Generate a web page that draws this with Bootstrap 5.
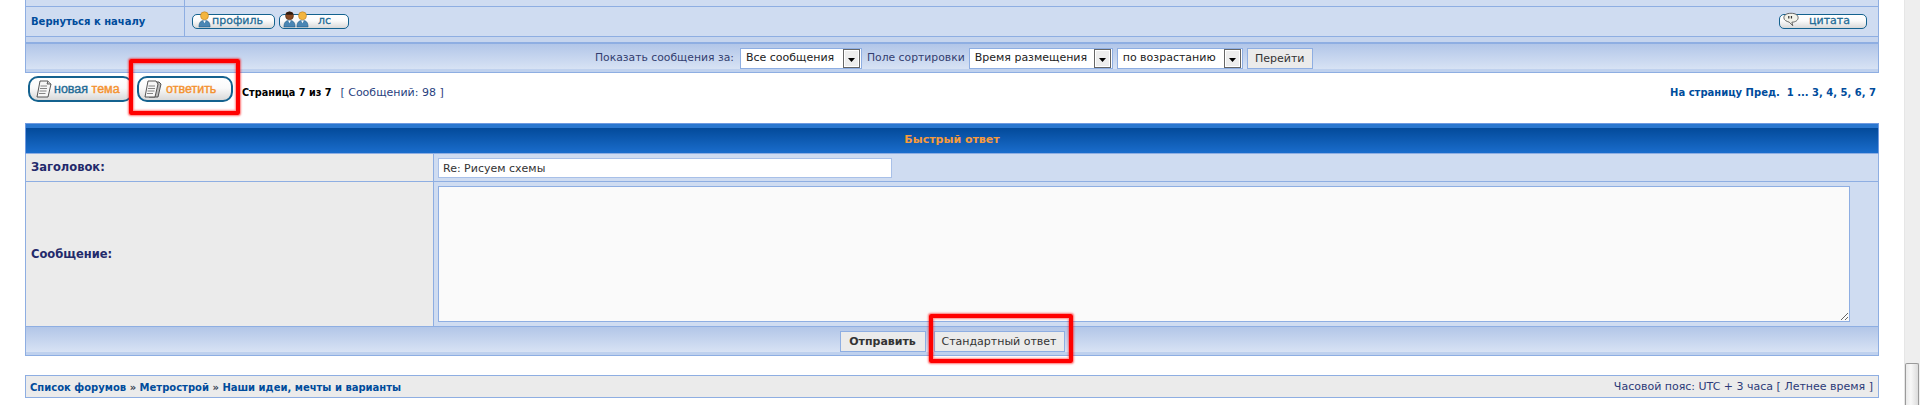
<!doctype html>
<html lang="ru">
<head>
<meta charset="utf-8">
<title>Быстрый ответ</title>
<link href="https://cdn.jsdelivr.net/npm/bootstrap@5.3.3/dist/css/bootstrap.min.css" rel="stylesheet">
<style>
  html, body { height: 405px; overflow: hidden; }
  body { font-family: "DejaVu Sans", Verdana, sans-serif; font-size: 11px; color: #323d4f; background: #fff; }
  a { color: #004c9c; text-decoration: none; }
  .page-main { width: 1904px; height: 405px; padding: 0 25px; flex: none; }
  .edge { border: 1px solid #8eaee2; border-width: 0 1px; }
  .cell-left { width: 159px; border-right: 1px solid #8eaee2; flex: none; }
  .row-top { height: 7px; background: #cfdcf1; border-bottom: 1px solid #8eaee2; }
  .row-author { height: 30px; background: #cfdcf1; border-bottom: 1px solid #8eaee2; }
  .row-author .cell-left { padding-left: 5px; font-size: 10px; font-weight: 700; }
  .row-gap { height: 5px; background: #c6d5ee; }
  .grad-bar { background: linear-gradient(#b2c6e8, #d7e2f4 88%, #bfd1ee 90%); border: 1px solid #8eaee2; }
  .bar-view { height: 31px; border-top-width: 2px; font-size: 10.8px; color: #323d6f; padding-left: 569px; }
  .bar-view select.form-select { font-family: "DejaVu Sans", Verdana, sans-serif; font-size: 11px; color: #222; height: 21px; padding: 0 0 0 5px; border: 1px solid #8eaee2; border-radius: 0; background-color: #fff; background-image: url("data:image/svg+xml,%3Csvg xmlns='http://www.w3.org/2000/svg' width='17' height='19'%3E%3Crect x='.5' y='.5' width='16' height='18' fill='%23ededed' stroke='%23666'/%3E%3Crect x='1.500' y='1.500' width='14' height='16' fill='none' stroke='%23fff'/%3E%3Cpath d='M5 9h7l-3.500 4z' fill='%23000'/%3E%3C/svg%3E"); background-size: 17px 19px; background-position: right 1px center; box-shadow: none; }
  .bar-view .forum-btn { height: 21px; width: 66px; padding: 0; font-size: 11px; margin-left: 4px; }
  .forum-btn { background: #ebebeb; border: 1px solid #8eaee2; border-radius: 0; color: #333; font-size: 11px; line-height: 1; }
  .pill { display: inline-flex; align-items: center; background: linear-gradient(#fff, #fafafa 45%, #d9d9d9); border: 2px solid #14628f; color: #1f6b95; white-space: nowrap; }
  .pill-sm { height: 15px; border-width: 1px; border-radius: 5px; font-size: 11px; -webkit-text-stroke: .3px #1f6b95; }
  .pill-sm svg { position: absolute; top: -4px; }
  .pill-lg { height: 26px; border-radius: 10px; font-family: "Liberation Sans", Arial, sans-serif; font-size: 12.500px; -webkit-text-stroke: .4px currentColor; padding-left: 5px; }
  .pill-lg svg { flex: none; }
  .orange { color: #f4912e; }
  .toolbar { height: 50px; padding: 3px 3px 0 3px; }
  .page-info { font-weight: 700; color: #000; font-size: 9.700px; }
  .post-count { color: #2a3f80; font-size: 11px; margin-left: 9px; }
  .pager { font-weight: 700; font-size: 10px; }
  .quick-head { height: 31px; padding-top: 4px; background: linear-gradient(#2a77cf 0 4px, #034a9a 4px, #1a6dcc); border: 1px solid #6f9ae0; border-bottom-color: #8eaee2; color: #f79b3c; font-weight: 700; }
  .form-row { background: #cfdcf1; border-bottom: 1px solid #8eaee2; }
  .form-label-cell { width: 408px; flex: none; background: #ebebeb; border-right: 1px solid #8eaee2; padding: 1px 0 0 5px; font-weight: 700; font-size: 11.500px; color: #232a6b; }
  .form-row input.form-control { width: 454px; height: 20px; margin: 4px 0 0 4px; padding: 0 4px; font-size: 11px; color: #333; border: 1px solid #a8c0e8; border-radius: 0; background: #fff; box-shadow: none; }
  .form-row textarea.form-control { width: 1412px; height: 136px; margin: 4px 0 0 4px; padding: 4px; border: 1px solid #8eaee2; border-radius: 0; background: #fafafa; box-shadow: none; min-height: 0; }
  .row-title { height: 28px; }
  .row-msg { height: 145px; }
  .bar-submit { height: 29px; gap: 8px; border-top-width: 0; }
  .bar-submit .forum-btn { height: 21px; padding: 0; }
  .crumbs { height: 23px; margin-top: 19px; padding: 1px 5px 0 4px; background: #ebebeb; border: 1px solid #8eaee2; }
  .crumbs-links { font-weight: 700; font-size: 10px; }
  .tz { color: #2c3a78; font-size: 11px; }
  .hl { position: absolute; border: 4px solid #f00; box-shadow: 0 0 2px 1px rgba(255,0,0,.55), inset 0 0 2px 1px rgba(255,0,0,.45); border-radius: 2px; pointer-events: none; }
  .hl-reply { left: 129px; top: 59px; width: 111px; height: 56px; }
  .hl-std { left: 929px; top: 314px; width: 144px; height: 49px; }
  .fake-scroll { width: 16px; height: 405px; background: #eeeeee; flex: none; border-left: 1px solid #e6e6e6; }
  .fake-scroll-gap { height: 363px; }
  .fake-thumb { height: 42px; margin: 0 1px 0 0; background: linear-gradient(90deg, #e9e9e9, #f8f8f8 40%, #dcdcdc); border: 1px solid #9a9a9a; border-bottom: 0; border-radius: 2px 2px 0 0; }

  .author-left { padding-left: 7px; }
  .author-profile { width: 83px; padding-left: 19px; }
  .profile-ico { left: 5px; }
  .author-pm { width: 70px; padding-left: 38px; }
  .author-pm svg { left: 3px; }
  .author-pm svg.pm-second { left: 16px; }
  .author-quote { width: 88px; margin-right: 11px; padding-left: 29px; }
  .author-quote svg { left: 3px; top: -3px; }
  .btn-new { width: 105px; gap: 1px; }
  .btn-reply { width: 96px; margin-left: 4px; gap: 4px; }
  .toolbar-info { margin: 9px 0 0 9px; }
  .label-sort { margin-left: 5px; }
  .sel-a { width: 122px !important; margin-left: 6px; }
  .sel-b { width: 144px !important; margin-left: 4px; }
  .sel-c { width: 126px !important; margin-left: 4px; }
  .btn-send { width: 86px; font-size: 11px; }
  .btn-std { width: 131px; }
</style>
</head>
<body class="d-flex position-relative">

<svg width="0" height="0" class="position-absolute">
  <defs>
    <symbol id="ico-doc" viewBox="0 0 18 18">
      <path d="M5 1h8l3 3-3 13H2z" fill="#f6f6f6" stroke="#444" stroke-width=".9"/>
      <path d="M13 1l-1 3h4" fill="#ccc" stroke="#444" stroke-width=".8"/>
      <path d="M5.500 6h6.500M5 8.500h7M4.500 11h7M4 13.500h6.500" stroke="#777" stroke-width=".9" fill="none"/>
    </symbol>
    <symbol id="ico-doc2" viewBox="0 0 18 18">
      <path d="M7 2h8l2 2-3 13H5z" fill="#bbb" stroke="#444" stroke-width=".9"/>
      <path d="M4 1h8l2 3-3 13H1z" fill="#f6f6f6" stroke="#444" stroke-width=".9"/>
      <path d="M4.500 6h6.500M4 8.500h7M3.500 11h7M3 13.500h6" stroke="#777" stroke-width=".9" fill="none"/>
    </symbol>
    <symbol id="ico-user" viewBox="0 0 14 18">
      <circle cx="7" cy="5" r="4.300" fill="#f3b53f" stroke="#b97a1a" stroke-width=".6"/>
      <path d="M1 17c0-5 2-7 6-7s6 2 6 7z" fill="#4a86b4" stroke="#1e5a84" stroke-width=".6"/>
      <path d="M5.500 10h3l-1.500 3z" fill="#fff"/>
    </symbol>
    <symbol id="ico-user-dark" viewBox="0 0 14 18">
      <circle cx="7" cy="5" r="4.300" fill="#8a4a22" stroke="#40230f" stroke-width=".6"/>
      <path d="M3 3c1-3 7-3 8 0l-1 1H4z" fill="#2e1a0e"/>
      <path d="M1 17c0-5 2-7 6-7s6 2 6 7z" fill="#4a86b4" stroke="#1e5a84" stroke-width=".6"/>
      <path d="M5.500 10h3l-1.500 3z" fill="#fff"/>
    </symbol>
    <symbol id="ico-quote" viewBox="0 0 18 16">
      <path d="M9 1c5 0 8 2 8 5s-3 5-7 5l1 4-4-4C4 10 1 9 1 6s3-5 8-5z" fill="#f2f2ea" stroke="#555" stroke-width="1"/>
      <path d="M6.500 4v3M9.500 4v3" stroke="#333" stroke-width="1.400"/>
    </symbol>
  </defs>
</svg>

<div class="page-main position-relative">
  <div class="edge row-top d-flex"><div class="cell-left"></div></div>
  <div class="edge row-author d-flex">
    <div class="cell-left d-flex align-items-center"><a href="#">Вернуться к началу</a></div>
    <div class="flex-grow-1 d-flex align-items-center justify-content-between">
      <div class="d-flex gap-1 author-left">
        <a href="#" class="pill pill-sm position-relative author-profile"><svg width="13" height="17" class="profile-ico"><use href="#ico-user"/></svg><span>профиль</span></a>
        <a href="#" class="pill pill-sm position-relative author-pm"><svg width="13" height="17"><use href="#ico-user-dark"/></svg><svg width="13" height="17" class="pm-second"><use href="#ico-user"/></svg><span>лс</span></a>
      </div>
      <a href="#" class="pill pill-sm position-relative author-quote"><svg width="16" height="15"><use href="#ico-quote"/></svg><span>цитата</span></a>
    </div>
  </div>
  <div class="edge row-gap"></div>
  <div class="grad-bar bar-view d-flex align-items-center">
    <span>Показать сообщения за:</span>
    <select class="form-select sel-a"><option>Все сообщения</option></select>
    <span class="label-sort">Поле сортировки</span>
    <select class="form-select sel-b"><option>Время размещения</option></select>
    <select class="form-select sel-c"><option>по возрастанию</option></select>
    <button type="button" class="btn forum-btn">Перейти</button>
  </div>

  <div class="toolbar d-flex align-items-start">
    <a href="#" class="pill pill-lg btn-new"><svg width="18" height="18"><use href="#ico-doc"/></svg><span>новая <span class="orange">тема</span></span></a>
    <a href="#" class="pill pill-lg btn-reply orange"><svg width="18" height="18"><use href="#ico-doc2"/></svg><span>ответить</span></a>
    <div class="toolbar-info d-flex flex-grow-1 justify-content-between">
      <div><span class="page-info">Страница 7 из 7</span><span class="post-count">[ Сообщений: 98 ]</span></div>
      <div class="pager"><a href="#">На страницу Пред.&nbsp; 1 ... 3, 4, 5, 6, 7</a></div>
    </div>
  </div>

  <div class="quick-head d-flex align-items-center justify-content-center">Быстрый ответ</div>
  <div class="edge form-row row-title d-flex">
    <div class="form-label-cell d-flex align-items-center">Заголовок:</div>
    <div><input type="text" class="form-control" value="Re: Рисуем схемы"></div>
  </div>
  <div class="edge form-row row-msg d-flex">
    <div class="form-label-cell d-flex align-items-center">Сообщение:</div>
    <div><textarea class="form-control"></textarea></div>
  </div>
  <div class="grad-bar bar-submit d-flex align-items-center justify-content-center">
    <button type="button" class="btn forum-btn fw-bold btn-send">Отправить</button>
    <button type="button" class="btn forum-btn btn-std">Стандартный ответ</button>
  </div>

  <div class="crumbs d-flex align-items-center justify-content-between">
    <div class="crumbs-links"><a href="#">Список форумов</a> » <a href="#">Метрострой</a> » <a href="#">Наши идеи, мечты и варианты</a></div>
    <div class="tz">Часовой пояс: UTC + 3 часа [ Летнее время ]</div>
  </div>

  <div class="hl hl-reply"></div>
  <div class="hl hl-std"></div>
</div>

<div class="fake-scroll">
  <div class="fake-scroll-gap"></div>
  <div class="fake-thumb"></div>
</div>
</body>
</html>
